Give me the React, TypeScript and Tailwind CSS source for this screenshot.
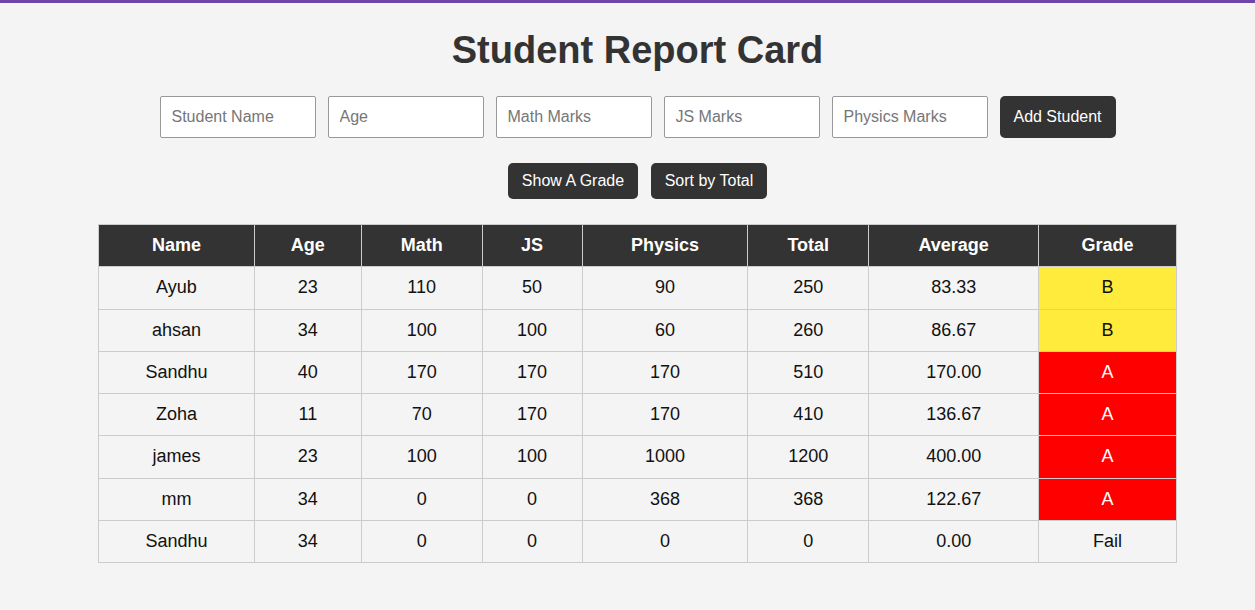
import React from "react";

type Student = {
  name: string;
  age: number;
  math: number;
  js: number;
  physics: number;
};

const students: Student[] = [
  { name: "Ayub", age: 23, math: 110, js: 50, physics: 90 },
  { name: "ahsan", age: 34, math: 100, js: 100, physics: 60 },
  { name: "Sandhu", age: 40, math: 170, js: 170, physics: 170 },
  { name: "Zoha", age: 11, math: 70, js: 170, physics: 170 },
  { name: "james", age: 23, math: 100, js: 100, physics: 1000 },
  { name: "mm", age: 34, math: 0, js: 0, physics: 368 },
  { name: "Sandhu", age: 34, math: 0, js: 0, physics: 0 },
];

function gradeFor(avg: number) {
  if (avg >= 90) return "A";
  if (avg >= 80) return "B";
  if (avg >= 70) return "C";
  if (avg > 0) return "D";
  return "Fail";
}

const gradeClass: Record<string, string> = {
  A: "bg-[#ff0000] text-white",
  B: "bg-[#ffeb3b] text-[#111]",
  Fail: "text-[#111]",
};

const columns = [
  { label: "Name", w: "w-[156px]" },
  { label: "Age", w: "w-[107px]" },
  { label: "Math", w: "w-[121px]" },
  { label: "JS", w: "w-[100px]" },
  { label: "Physics", w: "w-[166px]" },
  { label: "Total", w: "w-[121px]" },
  { label: "Average", w: "w-[170px]" },
  { label: "Grade", w: "w-[138px]" },
];

const inputs = ["Student Name", "Age", "Math Marks", "JS Marks", "Physics Marks"];

export default function App() {
  return (
    <div
      className="min-h-[610px] bg-[#f4f4f4] border-t-[3px] border-[#6f45aa] pl-5 flex flex-col items-center text-[#111]"
      style={{ fontFamily: '"Liberation Sans", Arial, sans-serif' }}
    >
      <h1 className="mt-[25px] text-[38px] leading-[44px] font-bold text-[#333]">
        Student Report Card
      </h1>

      {/* Form row */}
      <div className="mt-[24px] flex items-center gap-3">
        {inputs.map((p) => (
          <input
            key={p}
            placeholder={p}
            className="w-[156px] h-[42px] px-[11px] text-[16px] bg-white border border-[#999] rounded-[2px] placeholder:text-[#767676] outline-none"
          />
        ))}
        <button className="w-[116px] h-[42px] text-[16px] bg-[#333] text-white rounded-[5px]">
          Add Student
        </button>
      </div>

      {/* Actions */}
      <div className="mt-[25px] flex items-center gap-[13px]">
        <button className="w-[130px] h-[36px] text-[16px] bg-[#333] text-white rounded-[5px]">
          Show A Grade
        </button>
        <button className="w-[116px] h-[36px] text-[16px] bg-[#333] text-white rounded-[5px]">
          Sort by Total
        </button>
      </div>

      <table className="mt-[25px] w-[1079px] border-collapse text-[18px] text-center">
        <thead>
          <tr className="bg-[#333] text-white">
            {columns.map((c) => (
              <th
                key={c.label}
                className={`${c.w} border border-[#ccc] py-[10px] leading-[21.25px] font-bold`}
              >
                {c.label}
              </th>
            ))}
          </tr>
        </thead>
        <tbody>
          {students.map((s, i) => {
            const total = s.math + s.js + s.physics;
            const avg = total / 3;
            const g = gradeFor(avg);
            const cell = "border border-[#ccc] py-[10px] leading-[21.25px]";
            return (
              <tr key={i}>
                <td className={cell}>{s.name}</td>
                <td className={cell}>{s.age}</td>
                <td className={cell}>{s.math}</td>
                <td className={cell}>{s.js}</td>
                <td className={cell}>{s.physics}</td>
                <td className={cell}>{total}</td>
                <td className={cell}>{avg.toFixed(2)}</td>
                <td className={`${cell} ${gradeClass[g] ?? ""}`}>{g}</td>
              </tr>
            );
          })}
        </tbody>
      </table>
    </div>
  );
}
